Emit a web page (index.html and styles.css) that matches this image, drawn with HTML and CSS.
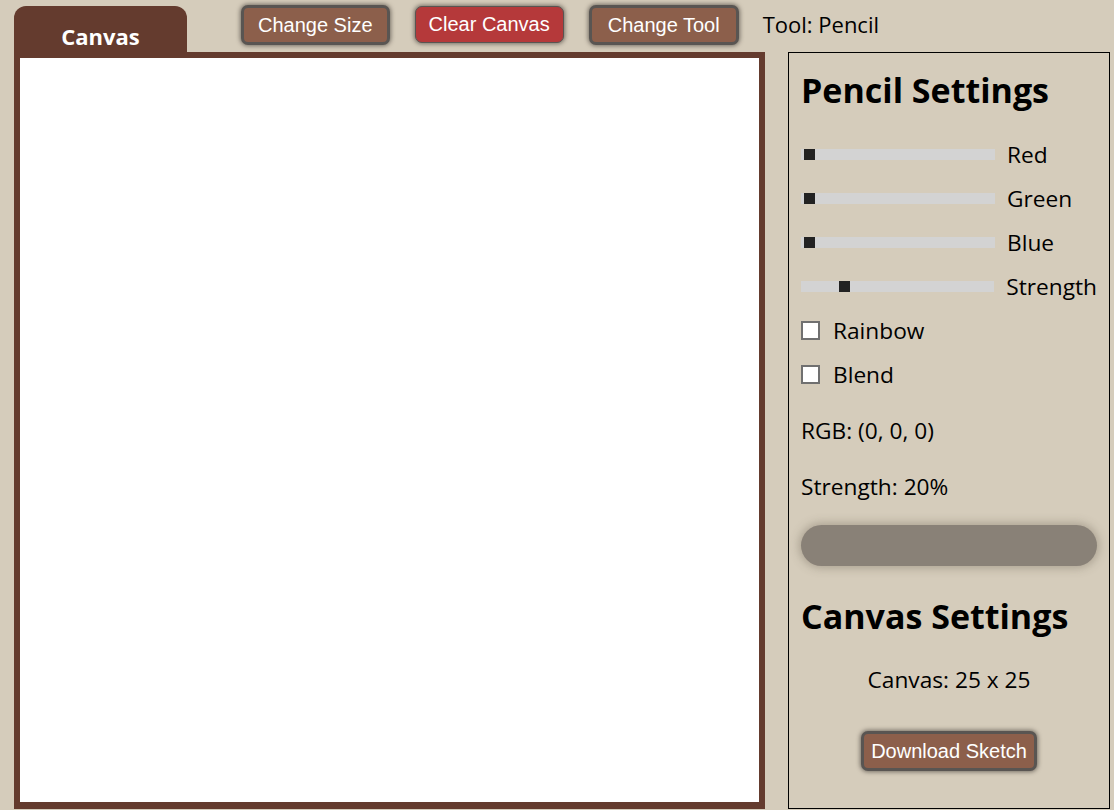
FILE: index.html
```html
<!DOCTYPE html>
<html lang="en">
<head>
<meta charset="utf-8">
<title>Sketch</title>
<link rel="stylesheet" href="styles.css">
</head>
<body>
<div class="page">
  <div class="topbar">
    <div class="tab">Canvas</div>
    <div class="toolbar">
      <button class="btn">Change Size</button>
      <button class="btn btn-red">Clear Canvas</button>
      <button class="btn btn-tool">Change Tool</button>
      <span class="tool-label">Tool: Pencil</span>
    </div>
  </div>
  <div class="main">
    <div class="frame"><div class="sheet"></div></div>
    <aside class="panel">
      <h2 class="panel-title">Pencil Settings</h2>
      <div class="row"><input class="slider" type="range" min="0" max="255" value="0"><span>Red</span></div>
      <div class="row"><input class="slider" type="range" min="0" max="255" value="0"><span>Green</span></div>
      <div class="row"><input class="slider" type="range" min="0" max="255" value="0"><span>Blue</span></div>
      <div class="row"><input class="slider" type="range" min="0" max="100" value="20"><span>Strength</span></div>
      <label class="row check"><input class="box" type="checkbox"><span>Rainbow</span></label>
      <label class="row check"><input class="box" type="checkbox"><span>Blend</span></label>
      <p class="info info-rgb">RGB: (0, 0, 0)</p>
      <p class="info info-str">Strength: 20%</p>
      <div class="preview"></div>
      <h2 class="panel-title second">Canvas Settings</h2>
      <p class="canvas-size">Canvas: 25 x 25</p>
      <div class="download-wrap"><button class="btn btn-dl">Download Sketch</button></div>
    </aside>
  </div>
</div>
</body>
</html>
```
FILE: styles.css
```css
* { box-sizing: border-box; }
html, body { margin: 0; padding: 0; }
body {
  background: #d5ccbb;
  font-family: "Open Sans", "Noto Sans", sans-serif;
  color: #000;
  overflow: hidden;
}
.page {
  padding: 6px 0 0 14px;
  width: 1114px;
  height: 810px;
}
.topbar {
  display: flex;
  height: 46px;
}
.tab {
  width: 173px;
  height: 46px;
  background: #643b2e;
  border-radius: 12px 12px 0 0;
  color: #fff;
  font-weight: 700;
  font-size: 22px;
  text-align: center;
  padding-top: 18px;
  line-height: 24px;
}
.toolbar {
  display: flex;
  align-items: flex-start;
  margin-left: 54px;
}
.btn {
  font-family: "Liberation Sans", Arial, sans-serif;
  font-size: 20px;
  color: #fff;
  background: #8c5f4b;
  border: 3px solid #595552;
  border-radius: 7px;
  box-shadow: 0 0 4px 1px rgba(40, 35, 30, 0.55);
  height: 40px;
  padding: 0 14px 1px;
  line-height: 22px;
  margin-top: -1px;
}
.btn-red {
  background: #b5393a;
  border-width: 1.5px;
  height: 37px;
  margin-left: 25px;
  margin-top: 0;
  padding: 0 13px 1px;
}
.btn-tool {
  margin-left: 25px;
  padding: 0 16px 1px;
}
.tool-label {
  font-size: 22px;
  margin-left: 24px;
  line-height: 26px;
  margin-top: 5px;
}
.main {
  display: flex;
  gap: 23px;
}
.frame {
  width: 751px;
  height: 757px;
  background: #643b2e;
  padding: 6px 6px 7px 6px;
}
.sheet {
  width: 100%;
  height: 100%;
  background: #fff;
}
.panel {
  width: 322px;
  height: 757px;
  border: 1px solid #000;
  padding: 0 12px 0 12px;
  display: flex;
  flex-direction: column;
}
.panel-title {
  font-size: 34px;
  font-weight: 700;
  margin: 15px 0 0 0;
  line-height: 44px;
  letter-spacing: 0;
}
.row {
  display: flex;
  align-items: center;
  height: 44px;
  font-size: 22.7px;
}
.panel-title + .row { margin-top: 20px; }
.slider {
  -webkit-appearance: none;
  appearance: none;
  width: 194px;
  height: 11px;
  margin: 0 12px 0 0;
  padding: 0 3px;
  background: #d3d3d3;
  outline: none;
}
.slider::-webkit-slider-thumb {
  -webkit-appearance: none;
  appearance: none;
  width: 11px;
  height: 11px;
  background: #222;
  border: none;
}
.box {
  -webkit-appearance: none;
  appearance: none;
  width: 19px;
  height: 19px;
  margin: 0 13px 0 0;
  background: #fff;
  border: 2px solid #707070;
}
.info {
  font-size: 22.7px;
  margin: 0;
  line-height: 30px;
}
.info-rgb { margin-top: 20px; }
.info-str { margin-top: 26px; }
.preview {
  margin-top: 23px;
  width: 296px;
  height: 41px;
  border-radius: 21px;
  background: #898177;
  box-shadow: 0 0 10px 2px rgba(90, 80, 65, 0.35);
}
.panel-title.second { margin-top: 28px; }
.canvas-size {
  text-align: center;
  font-size: 22.7px;
  margin: 27px 0 0 0;
  line-height: 30px;
}
.download-wrap {
  display: flex;
  justify-content: center;
  margin-top: 36px;
}
.btn-dl {
  margin: 0;
  height: 40px;
  padding: 0 7px 1px;
}
```
